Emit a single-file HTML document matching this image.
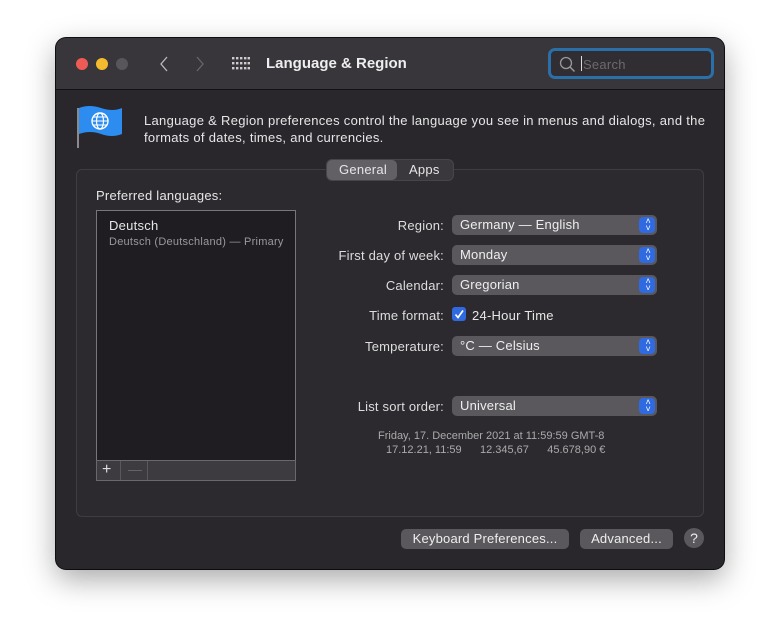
<!DOCTYPE html>
<html><head><meta charset="utf-8"><style>
*{margin:0;padding:0;box-sizing:border-box}
body{width:780px;height:643px;background:#fff;font-family:"Liberation Sans",sans-serif;position:relative;overflow:hidden}
.win{position:absolute;left:56px;top:38px;width:668px;height:531px;border-radius:10px;background:#29272c;box-shadow:0 10px 30px rgba(0,0,0,.35),0 0 0 1px #111;overflow:hidden}
.tb{position:absolute;left:0;top:0;width:668px;height:52px;background:#38363b;border-bottom:1px solid #111}
.a{position:absolute;color:#e6e6e6;font-size:13px;white-space:nowrap;letter-spacing:0.25px}
.dot{position:absolute;top:20px;width:12px;height:12px;border-radius:50%}
.pop{position:absolute;left:396px;width:205px;height:20px;background:#5a585c;border-radius:5px;color:#eee;font-size:13px;padding:2px 8px;letter-spacing:0.2px}
.pop:after{content:"";position:absolute;right:2px;top:2px;width:16px;height:16px;border-radius:4px;background:#2f6ae0}
.pop i{position:absolute;right:6px;top:3px;color:#fff;font-size:9px;line-height:7px;font-style:normal;z-index:1;text-align:center}
.lbl{position:absolute;right:280px;color:#ddd;font-size:13px;text-align:right;white-space:nowrap;letter-spacing:0.2px}
.btn{position:absolute;top:491px;height:20px;background:#5a585c;border-radius:5px;color:#eee;font-size:13px;text-align:center;line-height:20px;letter-spacing:0.2px}
</style></head><body>
<div class="win">
<div class="tb">
<div class="dot" style="left:20px;background:#ee5b56"></div>
<div class="dot" style="left:40px;background:#f5bb2e"></div>
<div class="dot" style="left:60px;background:#58565b"></div>
<svg style="position:absolute;left:102px;top:17px" width="12" height="18"><path d="M9 2L3 9l6 7" stroke="#bbb" stroke-width="1.3" fill="none"/></svg>
<svg style="position:absolute;left:138px;top:17px" width="12" height="18"><path d="M3 2l6 7-6 7" stroke="#666" stroke-width="1.3" fill="none"/></svg>
<svg style="position:absolute;left:176px;top:19px" width="18" height="14" fill="#ccc"><g id="r"><rect x="0" y="0" width="2.4" height="2.4"/><rect x="4" y="0" width="2.4" height="2.4"/><rect x="8" y="0" width="2.4" height="2.4"/><rect x="12" y="0" width="2.4" height="2.4"/><rect x="15.6" y="0" width="2.4" height="2.4"/></g><use href="#r" y="5"/><use href="#r" y="10"/></svg>
<div class="a" style="left:210px;top:17px;font-size:15px;font-weight:bold;color:#eee;letter-spacing:0">Language &amp; Region</div>
<div style="position:absolute;left:492px;top:10px;width:166px;height:31px;border:3px solid #2a6fa8;border-radius:7px;background:#302e33"></div>
<svg style="position:absolute;left:503px;top:18px" width="18" height="18"><circle cx="7" cy="7" r="5.5" stroke="#999" stroke-width="1.3" fill="none"/><path d="M11 11l4.5 4.5" stroke="#999" stroke-width="1.4"/></svg>
<div style="position:absolute;left:525px;top:18px;width:1px;height:15px;background:#ddd"></div>
<div class="a" style="left:527px;top:19px;color:#6c6a6e">Search</div>
</div>
<svg style="position:absolute;left:20px;top:66px" width="48" height="46"><rect x="1" y="4" width="2" height="40" fill="#8a8a8e"/><path d="M3 4q10-4 22 0t21 0v26q-10 4-21 0t-22 0z" fill="#2d8cf0"/><circle cx="24" cy="17" r="8" stroke="#fff" stroke-width="1.4" fill="none"/><ellipse cx="24" cy="17" rx="3.5" ry="8" stroke="#fff" stroke-width="1.2" fill="none"/><path d="M16 17h16M17 13h14M17 21h14" stroke="#fff" stroke-width="1.1"/></svg>
<div class="a" style="left:88px;top:74px;line-height:17px;letter-spacing:0.3px">Language &amp; Region preferences control the language you see in menus and dialogs, and the<br>formats of dates, times, and currencies.</div>
<div style="position:absolute;left:20px;top:131px;width:628px;height:348px;border:1px solid #3f3d42;border-radius:6px;background:#2c2a2f"></div>
<div style="position:absolute;left:270px;top:121px;width:128px;height:22px;border:1px solid #47454a;border-radius:6px;background:#3a383d"></div>
<div style="position:absolute;left:271px;top:122px;width:70px;height:20px;border-radius:5px;background:#625f65"></div>
<div class="a" style="left:283px;top:124px">General</div>
<div class="a" style="left:353px;top:124px">Apps</div>
<div class="a" style="left:40px;top:150px">Preferred languages:</div>
<div style="position:absolute;left:40px;top:172px;width:200px;height:271px;border:1px solid #78767b;background:#1f1d21"></div>
<div class="a" style="left:53px;top:180px">Deutsch</div>
<div class="a" style="left:53px;top:198px;font-size:11px;color:#9a989c">Deutsch (Deutschland) — Primary</div>
<div style="position:absolute;left:40px;top:422px;width:200px;height:21px;background:#3d3b40;border:1px solid #6a686c"></div>
<div style="position:absolute;left:64px;top:423px;width:1px;height:19px;background:#5a585c"></div>
<div style="position:absolute;left:91px;top:423px;width:1px;height:19px;background:#5a585c"></div>
<div class="a" style="left:46px;top:423px;font-size:16px;color:#ddd">+</div>
<div class="a" style="left:72px;top:423px;font-size:14px;color:#666">—</div>
<div class="lbl" style="top:180px">Region:</div>
<div class="pop" style="top:177px">Germany — English<i>˄<br>˅</i></div>
<div class="lbl" style="top:210px">First day of week:</div>
<div class="pop" style="top:207px">Monday<i>˄<br>˅</i></div>
<div class="lbl" style="top:240px">Calendar:</div>
<div class="pop" style="top:237px">Gregorian<i>˄<br>˅</i></div>
<div class="lbl" style="top:270px">Time format:</div>
<div style="position:absolute;left:396px;top:269px;width:14px;height:14px;border-radius:3px;background:#2f6ae0"></div>
<svg style="position:absolute;left:396px;top:269px" width="14" height="14"><path d="M3.5 7.5l2.5 3 5-7" stroke="#fff" stroke-width="1.7" fill="none"/></svg>
<div class="a" style="left:416px;top:270px">24-Hour Time</div>
<div class="lbl" style="top:301px">Temperature:</div>
<div class="pop" style="top:298px">°C — Celsius<i>˄<br>˅</i></div>
<div class="lbl" style="top:361px">List sort order:</div>
<div class="pop" style="top:358px">Universal<i>˄<br>˅</i></div>
<div class="a" style="left:322px;top:392px;font-size:11px;color:#aaa;letter-spacing:0">Friday, 17. December 2021 at 11:59:59 GMT-8</div>
<div class="a" style="left:330px;top:406px;font-size:11px;color:#aaa;letter-spacing:0">17.12.21, 11:59&nbsp;&nbsp;&nbsp;&nbsp;&nbsp;&nbsp;12.345,67&nbsp;&nbsp;&nbsp;&nbsp;&nbsp;&nbsp;45.678,90 €</div>
<div class="btn" style="left:345px;width:168px">Keyboard Preferences...</div>
<div class="btn" style="left:524px;width:93px">Advanced...</div>
<div style="position:absolute;left:628px;top:490px;width:20px;height:20px;border-radius:50%;background:#5a585c;color:#eee;font-size:14px;text-align:center;line-height:20px">?</div>
</div>
</body></html>
